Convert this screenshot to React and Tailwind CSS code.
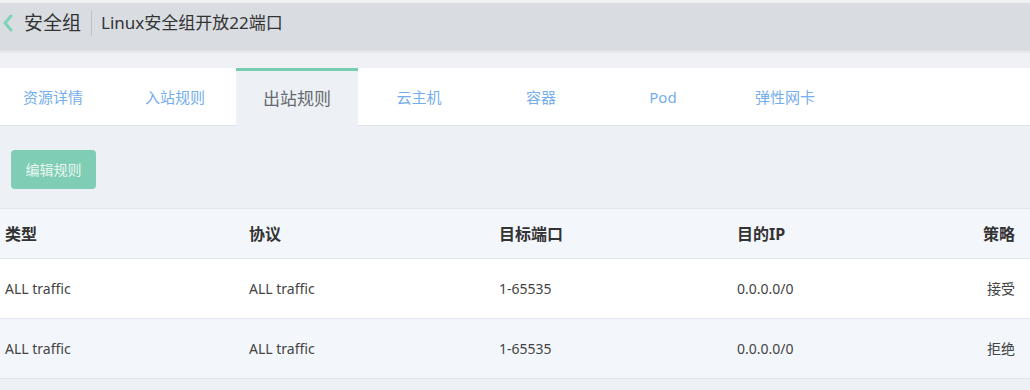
import { useState } from "react";

// ── Security group outbound rules page ────────────────────────
const tabs = ["资源详情", "入站规则", "出站规则", "云主机", "容器", "Pod", "弹性网卡"];

const rules = [
  { type: "ALL traffic", proto: "ALL traffic", port: "1-65535", ip: "0.0.0.0/0", policy: "接受" },
  { type: "ALL traffic", proto: "ALL traffic", port: "1-65535", ip: "0.0.0.0/0", policy: "拒绝" },
];

const font = { fontFamily: '"Noto Sans", "Noto Sans CJK SC", sans-serif' };

function Row({ cells, className }) {
  return (
    <div className={`flex items-center border-b border-[#e3e7ed] ${className}`}>
      <div className="w-[249px] pl-[5px]">{cells[0]}</div>
      <div className="w-[250px]">{cells[1]}</div>
      <div className="w-[238px]">{cells[2]}</div>
      <div className="flex-1">{cells[3]}</div>
      <div className="pr-[15px] text-right">{cells[4]}</div>
    </div>
  );
}

export default function App() {
  const [active, setActive] = useState(2);

  return (
    <div className="w-[1030px] h-[390px] overflow-hidden bg-[#edf0f4]" style={font}>
      {/* header */}
      <div className="h-[53px] bg-[#d9dde2] border-t-[3px] border-[#eef0f2] border-b-2 border-b-dotted border-b-[#e6e8eb] flex items-start pt-[6px]">
        <div className="flex items-center h-[28px]">
          <svg width="14" height="18" viewBox="0 0 14 18" className="ml-[1px]">
            <polyline points="10,2 4,9 10,16" fill="none" stroke="#7ed3b6" strokeWidth="3" strokeLinecap="round" strokeLinejoin="round" />
          </svg>
          <span className="ml-[9px] text-[19px] text-[#333]">安全组</span>
          <span className="ml-[10px] w-px h-[26px] bg-[#bfc3c9]" />
          <span className="ml-[9px] text-[17px] text-[#333]">Linux安全组开放22端口</span>
        </div>
      </div>

      <div className="h-[15px] bg-[#eff1f4]" />

      {/* tabs */}
      <div className="h-[58px] bg-white border-b border-[#e0e4ea] flex">
        <div className="flex -ml-[8px]">
          {tabs.map((t, i) => (
            <button
              key={t}
              onClick={() => setActive(i)}
              className={`w-[122px] h-[58px] flex items-center justify-center ${
                i === active
                  ? "bg-[#edf0f4] text-[#666a70] text-[17px] border-t-[3px] border-[#76cdb0]"
                  : "text-[#74aeec] text-[15px]"
              }`}
            >
              {t}
            </button>
          ))}
        </div>
      </div>

      {/* toolbar */}
      <div className="h-[82px] pt-[24px] pl-[11px]">
        <button className="w-[85px] h-[39px] rounded-[4px] bg-[#7ecdb4] text-[#eaf7f2] text-[14px]">编辑规则</button>
      </div>

      {/* table */}
      <div className="border-t border-[#e1e5eb] text-[14px] text-[#444]">
        <Row
          className="h-[50px] bg-[#f3f6fa] font-bold text-[16px] text-[#333]"
          cells={["类型", "协议", "目标端口", "目的IP", "策略"]}
        />
        {rules.map((r, i) => (
          <Row
            key={i}
            className={`h-[60px] ${i % 2 === 0 ? "bg-white" : "bg-[#f3f6fa]"}`}
            cells={[r.type, r.proto, r.port, r.ip, r.policy]}
          />
        ))}
      </div>
    </div>
  );
}
